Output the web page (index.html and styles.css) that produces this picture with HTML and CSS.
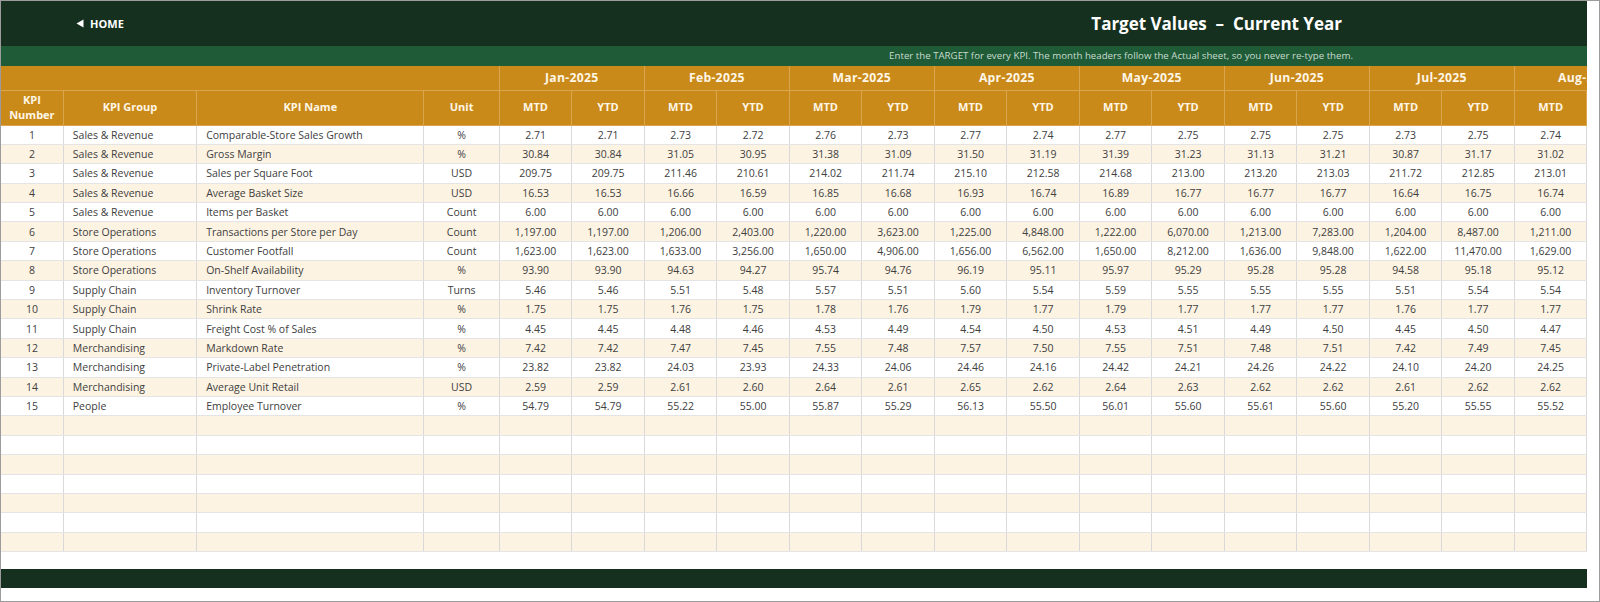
FILE: index.html
```html
<!DOCTYPE html>
<html lang="en">
<head>
<meta charset="utf-8">
<title>Target Values – Current Year</title>
<link rel="stylesheet" href="styles.css">
</head>
<body>
<div class="frame">
  <div class="sheet">
    <header class="topbar">
      <a class="home" href="#"><svg class="tri" viewBox="0 0 8 9" width="8" height="9"><polygon points="7.5,0.5 7.5,8.5 0.5,4.5" fill="#ffffff"/></svg>HOME</a>
      <h1 class="title">Target Values&nbsp; –&nbsp; Current Year</h1>
    </header>
    <div class="band">Enter the TARGET for every KPI. The month headers follow the Actual sheet, so you never re-type them.</div>
    <table class="grid">
      <colgroup>
        <col class="c-num"><col class="c-group"><col class="c-name"><col class="c-unit">
        <col class="c-val"><col class="c-val"><col class="c-val"><col class="c-val">
        <col class="c-val"><col class="c-val"><col class="c-val"><col class="c-val">
        <col class="c-val"><col class="c-val"><col class="c-val"><col class="c-val">
        <col class="c-val"><col class="c-val"><col class="c-val"><col class="c-val">
      </colgroup>
      <thead>
        <tr class="months">
          <th colspan="4"></th>
          <th colspan="2">Jan-2025</th><th colspan="2">Feb-2025</th><th colspan="2">Mar-2025</th><th colspan="2">Apr-2025</th>
          <th colspan="2">May-2025</th><th colspan="2">Jun-2025</th><th colspan="2">Jul-2025</th><th colspan="2">Aug-2025</th>
        </tr>
        <tr class="subs">
          <th>KPI<br>Number</th><th>KPI Group</th><th>KPI Name</th><th>Unit</th>
          <th>MTD</th><th>YTD</th><th>MTD</th><th>YTD</th><th>MTD</th><th>YTD</th><th>MTD</th><th>YTD</th>
          <th>MTD</th><th>YTD</th><th>MTD</th><th>YTD</th><th>MTD</th><th>YTD</th><th>MTD</th><th>YTD</th>
        </tr>
      </thead>
      <tbody>
        <tr><td class="n">1</td><td class="t">Sales &amp; Revenue</td><td class="t">Comparable-Store Sales Growth</td><td class="n">%</td><td>2.71</td><td>2.71</td><td>2.73</td><td>2.72</td><td>2.76</td><td>2.73</td><td>2.77</td><td>2.74</td><td>2.77</td><td>2.75</td><td>2.75</td><td>2.75</td><td>2.73</td><td>2.75</td><td>2.74</td><td>2.75</td></tr>
        <tr><td class="n">2</td><td class="t">Sales &amp; Revenue</td><td class="t">Gross Margin</td><td class="n">%</td><td>30.84</td><td>30.84</td><td>31.05</td><td>30.95</td><td>31.38</td><td>31.09</td><td>31.50</td><td>31.19</td><td>31.39</td><td>31.23</td><td>31.13</td><td>31.21</td><td>30.87</td><td>31.17</td><td>31.02</td><td>31.15</td></tr>
        <tr><td class="n">3</td><td class="t">Sales &amp; Revenue</td><td class="t">Sales per Square Foot</td><td class="n">USD</td><td>209.75</td><td>209.75</td><td>211.46</td><td>210.61</td><td>214.02</td><td>211.74</td><td>215.10</td><td>212.58</td><td>214.68</td><td>213.00</td><td>213.20</td><td>213.03</td><td>211.72</td><td>212.85</td><td>213.01</td><td>212.87</td></tr>
        <tr><td class="n">4</td><td class="t">Sales &amp; Revenue</td><td class="t">Average Basket Size</td><td class="n">USD</td><td>16.53</td><td>16.53</td><td>16.66</td><td>16.59</td><td>16.85</td><td>16.68</td><td>16.93</td><td>16.74</td><td>16.89</td><td>16.77</td><td>16.77</td><td>16.77</td><td>16.64</td><td>16.75</td><td>16.74</td><td>16.75</td></tr>
        <tr><td class="n">5</td><td class="t">Sales &amp; Revenue</td><td class="t">Items per Basket</td><td class="n">Count</td><td>6.00</td><td>6.00</td><td>6.00</td><td>6.00</td><td>6.00</td><td>6.00</td><td>6.00</td><td>6.00</td><td>6.00</td><td>6.00</td><td>6.00</td><td>6.00</td><td>6.00</td><td>6.00</td><td>6.00</td><td>6.00</td></tr>
        <tr><td class="n">6</td><td class="t">Store Operations</td><td class="t">Transactions per Store per Day</td><td class="n">Count</td><td>1,197.00</td><td>1,197.00</td><td>1,206.00</td><td>2,403.00</td><td>1,220.00</td><td>3,623.00</td><td>1,225.00</td><td>4,848.00</td><td>1,222.00</td><td>6,070.00</td><td>1,213.00</td><td>7,283.00</td><td>1,204.00</td><td>8,487.00</td><td>1,211.00</td><td>9,698.00</td></tr>
        <tr><td class="n">7</td><td class="t">Store Operations</td><td class="t">Customer Footfall</td><td class="n">Count</td><td>1,623.00</td><td>1,623.00</td><td>1,633.00</td><td>3,256.00</td><td>1,650.00</td><td>4,906.00</td><td>1,656.00</td><td>6,562.00</td><td>1,650.00</td><td>8,212.00</td><td>1,636.00</td><td>9,848.00</td><td>1,622.00</td><td>11,470.00</td><td>1,629.00</td><td>13,099.00</td></tr>
        <tr><td class="n">8</td><td class="t">Store Operations</td><td class="t">On-Shelf Availability</td><td class="n">%</td><td>93.90</td><td>93.90</td><td>94.63</td><td>94.27</td><td>95.74</td><td>94.76</td><td>96.19</td><td>95.11</td><td>95.97</td><td>95.29</td><td>95.28</td><td>95.28</td><td>94.58</td><td>95.18</td><td>95.12</td><td>95.17</td></tr>
        <tr><td class="n">9</td><td class="t">Supply Chain</td><td class="t">Inventory Turnover</td><td class="n">Turns</td><td>5.46</td><td>5.46</td><td>5.51</td><td>5.48</td><td>5.57</td><td>5.51</td><td>5.60</td><td>5.54</td><td>5.59</td><td>5.55</td><td>5.55</td><td>5.55</td><td>5.51</td><td>5.54</td><td>5.54</td><td>5.54</td></tr>
        <tr><td class="n">10</td><td class="t">Supply Chain</td><td class="t">Shrink Rate</td><td class="n">%</td><td>1.75</td><td>1.75</td><td>1.76</td><td>1.75</td><td>1.78</td><td>1.76</td><td>1.79</td><td>1.77</td><td>1.79</td><td>1.77</td><td>1.77</td><td>1.77</td><td>1.76</td><td>1.77</td><td>1.77</td><td>1.77</td></tr>
        <tr><td class="n">11</td><td class="t">Supply Chain</td><td class="t">Freight Cost % of Sales</td><td class="n">%</td><td>4.45</td><td>4.45</td><td>4.48</td><td>4.46</td><td>4.53</td><td>4.49</td><td>4.54</td><td>4.50</td><td>4.53</td><td>4.51</td><td>4.49</td><td>4.50</td><td>4.45</td><td>4.50</td><td>4.47</td><td>4.49</td></tr>
        <tr><td class="n">12</td><td class="t">Merchandising</td><td class="t">Markdown Rate</td><td class="n">%</td><td>7.42</td><td>7.42</td><td>7.47</td><td>7.45</td><td>7.55</td><td>7.48</td><td>7.57</td><td>7.50</td><td>7.55</td><td>7.51</td><td>7.48</td><td>7.51</td><td>7.42</td><td>7.49</td><td>7.45</td><td>7.48</td></tr>
        <tr><td class="n">13</td><td class="t">Merchandising</td><td class="t">Private-Label Penetration</td><td class="n">%</td><td>23.82</td><td>23.82</td><td>24.03</td><td>23.93</td><td>24.33</td><td>24.06</td><td>24.46</td><td>24.16</td><td>24.42</td><td>24.21</td><td>24.26</td><td>24.22</td><td>24.10</td><td>24.20</td><td>24.25</td><td>24.21</td></tr>
        <tr><td class="n">14</td><td class="t">Merchandising</td><td class="t">Average Unit Retail</td><td class="n">USD</td><td>2.59</td><td>2.59</td><td>2.61</td><td>2.60</td><td>2.64</td><td>2.61</td><td>2.65</td><td>2.62</td><td>2.64</td><td>2.63</td><td>2.62</td><td>2.62</td><td>2.61</td><td>2.62</td><td>2.62</td><td>2.62</td></tr>
        <tr><td class="n">15</td><td class="t">People</td><td class="t">Employee Turnover</td><td class="n">%</td><td>54.79</td><td>54.79</td><td>55.22</td><td>55.00</td><td>55.87</td><td>55.29</td><td>56.13</td><td>55.50</td><td>56.01</td><td>55.60</td><td>55.61</td><td>55.60</td><td>55.20</td><td>55.55</td><td>55.52</td><td>55.55</td></tr>
        <tr class="empty"><td></td><td></td><td></td><td></td><td></td><td></td><td></td><td></td><td></td><td></td><td></td><td></td><td></td><td></td><td></td><td></td><td></td><td></td><td></td><td></td></tr>
        <tr class="empty"><td></td><td></td><td></td><td></td><td></td><td></td><td></td><td></td><td></td><td></td><td></td><td></td><td></td><td></td><td></td><td></td><td></td><td></td><td></td><td></td></tr>
        <tr class="empty"><td></td><td></td><td></td><td></td><td></td><td></td><td></td><td></td><td></td><td></td><td></td><td></td><td></td><td></td><td></td><td></td><td></td><td></td><td></td><td></td></tr>
        <tr class="empty"><td></td><td></td><td></td><td></td><td></td><td></td><td></td><td></td><td></td><td></td><td></td><td></td><td></td><td></td><td></td><td></td><td></td><td></td><td></td><td></td></tr>
        <tr class="empty"><td></td><td></td><td></td><td></td><td></td><td></td><td></td><td></td><td></td><td></td><td></td><td></td><td></td><td></td><td></td><td></td><td></td><td></td><td></td><td></td></tr>
        <tr class="empty"><td></td><td></td><td></td><td></td><td></td><td></td><td></td><td></td><td></td><td></td><td></td><td></td><td></td><td></td><td></td><td></td><td></td><td></td><td></td><td></td></tr>
        <tr class="empty"><td></td><td></td><td></td><td></td><td></td><td></td><td></td><td></td><td></td><td></td><td></td><td></td><td></td><td></td><td></td><td></td><td></td><td></td><td></td><td></td></tr>
      </tbody>
    </table>
    <div class="footer"></div>
  </div>
</div>
</body>
</html>
```

FILE: styles.css
```css
* { box-sizing: border-box; }
html, body { margin: 0; padding: 0; background: #ffffff; }
body { font-family: "Open Sans", "Noto Sans", "Liberation Sans", sans-serif; }

.frame {
  width: 1600px;
  height: 602px;
  border: 1px solid #9c9c9c;
  background: #ffffff;
  overflow: hidden;
}

.sheet {
  width: 1586px;
  overflow: hidden;
}

.topbar {
  height: 45px;
  background: #15301f;
  display: flex;
  align-items: center;
  justify-content: space-between;
  padding: 0 245px 0 75px;
}

.home {
  display: flex;
  align-items: center;
  gap: 6px;
  color: #ffffff;
  text-decoration: none;
  font-weight: 700;
  font-size: 11px;
  letter-spacing: 0.1px;
}
.tri { display: block; }

.title {
  margin: 0;
  color: #ffffff;
  font-size: 17px;
  font-weight: 700;
}

.band {
  height: 20px;
  background: #1f5b37;
  color: #c9dccf;
  font-size: 9.7px;
  line-height: 20px;
  text-align: right;
  padding-right: 234px;
}

.grid {
  table-layout: fixed;
  border-collapse: collapse;
  width: 1658px;
  font-size: 10.5px;
  color: #404040;
}
.c-num { width: 62.3px; }
.c-group { width: 133.4px; }
.c-name { width: 227.3px; }
.c-unit { width: 75.3px; }
.c-val { width: 72.5px; }

.grid th {
  background: #c98a1a;
  color: #fff6e6;
  font-weight: 700;
  border: 1px solid #d9a54e;
  padding: 0;
  text-align: center;
}
.grid thead tr:first-child th { border-top: none; }
.grid th:first-child { border-left: none; }
.months th { height: 24px; font-size: 12.2px; letter-spacing: 0.3px; }
.subs th { height: 35px; font-size: 11px; line-height: 1.3; }

.grid td {
  height: 19.4px;
  padding: 0;
  border-top: 1px solid #e4e4e4;
  border-bottom: 1px solid #e4e4e4;
  border-left: 1px solid #d9d9d9;
  border-right: 1px solid #d9d9d9;
  text-align: center;
  white-space: nowrap;
  overflow: hidden;
}
.grid td:first-child { border-left: none; }
.grid td.t { text-align: left; padding-left: 9px; }
.grid tbody tr:nth-child(even) td { background: #fdf3e3; }
.grid tbody tr:nth-child(odd) td { background: #ffffff; }

.footer {
  margin-top: 17px;
  height: 19px;
  background: #15301f;
}
```
